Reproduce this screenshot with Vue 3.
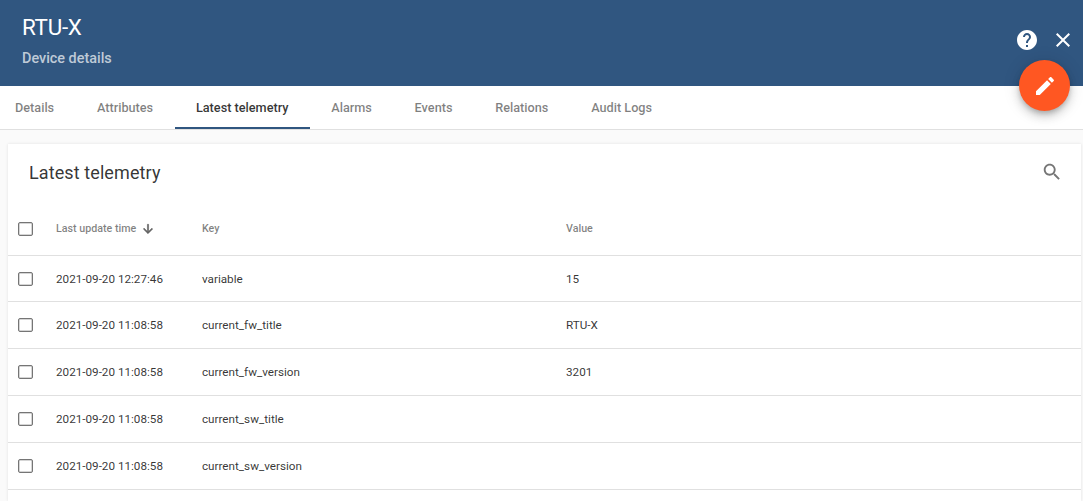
<template>
  <div class="page">
    <header class="head">
      <div class="titles">
        <h1>RTU-X</h1>
        <p>Device details</p>
      </div>
      <div class="actions">
        <svg class="ico" viewBox="0 0 24 24" width="24" height="24"><path fill="#fff" d="M12 2C6.48 2 2 6.48 2 12s4.48 10 10 10 10-4.48 10-10S17.52 2 12 2zm1 17h-2v-2h2v2zm2.07-7.75l-.9.92C13.45 12.9 13 13.5 13 15h-2v-.5c0-1.1.45-2.1 1.17-2.83l1.24-1.26c.37-.36.59-.86.59-1.41 0-1.1-.9-2-2-2s-2 .9-2 2H8c0-2.21 1.79-4 4-4s4 1.79 4 4c0 .88-.36 1.68-.93 2.25z"/></svg>
        <svg class="ico" viewBox="0 0 24 24" width="24" height="24"><path fill="#fff" d="M19 6.41L17.59 5 12 10.59 6.41 5 5 6.41 10.59 12 5 17.59 6.41 19 12 13.41 17.59 19 19 17.59 13.41 12z"/></svg>
      </div>
    </header>
    <button class="fab" aria-label="Edit">
      <svg viewBox="0 0 24 24" width="24" height="24"><path fill="#fff" d="M3 17.25V21h3.75L17.81 9.94l-3.75-3.75L3 17.25zM20.71 7.04c.39-.39.39-1.02 0-1.41l-2.34-2.34c-.39-.39-1.02-.39-1.41 0l-1.83 1.83 3.75 3.75 1.83-1.83z"/></svg>
    </button>
    <nav class="tabs">
      <span v-for="t in tabs" :key="t" class="tab" :class="{ active: t === 'Latest telemetry' }">{{ t }}</span>
    </nav>
    <main class="body">
      <section class="card">
        <div class="toolbar">
          <h2>Latest telemetry</h2>
          <svg viewBox="0 0 24 24" width="22" height="22"><path fill="#757575" d="M15.5 14h-.79l-.28-.27C15.41 12.59 16 11.11 16 9.5 16 5.91 13.09 3 9.5 3S3 5.91 3 9.5 5.91 16 9.5 16c1.61 0 3.09-.59 4.23-1.57l.27.28v.79l5 4.99L20.49 19l-4.99-5zm-6 0C7.01 14 5 11.99 5 9.5S7.01 5 9.5 5 14 7.01 14 9.5 11.99 14 9.5 14z"/></svg>
        </div>
        <div class="row headrow">
          <span class="check"></span>
          <span class="c-time">Last update time
            <svg viewBox="0 0 24 24" width="14" height="14"><path fill="#616161" stroke="#616161" stroke-width="1" d="M20 12l-1.41-1.41L13 16.17V4h-2v12.17l-5.58-5.59L4 12l8 8 8-8z"/></svg>
          </span>
          <span class="c-key">Key</span>
          <span class="c-val">Value</span>
        </div>
        <div v-for="r in rows" :key="r.key" class="row">
          <span class="check"></span>
          <span class="c-time">{{ r.time }}</span>
          <span class="c-key">{{ r.key }}</span>
          <span class="c-val">{{ r.value }}</span>
        </div>
      </section>
    </main>
  </div>
</template>

<script setup>
const tabs = ['Details', 'Attributes', 'Latest telemetry', 'Alarms', 'Events', 'Relations', 'Audit Logs']
const rows = [
  { time: '2021-09-20 12:27:46', key: 'variable', value: '15' },
  { time: '2021-09-20 11:08:58', key: 'current_fw_title', value: 'RTU-X' },
  { time: '2021-09-20 11:08:58', key: 'current_fw_version', value: '3201' },
  { time: '2021-09-20 11:08:58', key: 'current_sw_title', value: '' },
  { time: '2021-09-20 11:08:58', key: 'current_sw_version', value: '' },
]
</script>

<style>
html, body { margin: 0; overflow: hidden; }
</style>

<style scoped>
.page {
  position: relative;
  width: 1083px;
  height: 501px;
  overflow: hidden;
  background: #fff;
  font-family: Roboto, "Liberation Sans", sans-serif;
}
.head {
  height: 86px;
  background: #305680;
  display: flex;
  justify-content: space-between;
  box-sizing: border-box;
  padding: 11px 8px 0 22px;
  color: #fff;
}
h1 { margin: 0; font-size: 22.4px; font-weight: 400; line-height: 32px; letter-spacing: -0.3px; }
.titles p { margin: 6px 0 0; font-size: 14.4px; font-weight: 500; line-height: 20px; color: rgba(255,255,255,.7); }
.actions { display: flex; gap: 12px; padding-top: 17px; }
.fab {
  position: absolute;
  left: 1019px;
  top: 60px;
  width: 51px;
  height: 51px;
  border: 0;
  padding: 0;
  border-radius: 50%;
  background: #ff5722;
  display: flex;
  align-items: center;
  justify-content: center;
  box-shadow: 0 3px 5px -1px rgba(0,0,0,.2), 0 6px 10px 0 rgba(0,0,0,.14), 0 1px 18px 0 rgba(0,0,0,.12);
}
.tabs {
  height: 44px;
  box-sizing: border-box;
  display: flex;
  border-bottom: 1px solid #e0e0e0;
}
.tab {
  height: 43px;
  box-sizing: border-box;
  padding: 0 21.4px;
  display: flex;
  align-items: center;
  font-size: 12.7px;
  font-weight: 500;
  color: rgba(0,0,0,.5);
}
.tab:first-child { padding-left: 15px; }
.tab.active { color: rgba(0,0,0,.8); box-shadow: inset 0 -2px 0 #305680; }
.body {
  background: #fafafa;
  height: 371px;
  box-sizing: border-box;
  padding: 14px 2px 0 8px;
}
.card {
  background: #fff;
  height: 100%;
  box-shadow: 0 0 3px rgba(0,0,0,.1);
}
.toolbar {
  height: 56px;
  box-sizing: border-box;
  padding: 0 18px 0 21px;
  display: flex;
  align-items: center;
  justify-content: space-between;
}
h2 { margin: 0; font-size: 18px; font-weight: 400; color: rgba(0,0,0,.8); letter-spacing: .1px; }
.row {
  height: 47px;
  box-sizing: border-box;
  display: flex;
  align-items: center;
  border-bottom: 1px solid #e0e0e0;
  font-size: 11.7px;
  color: rgba(0,0,0,.8);
}
.row:nth-child(3) { height: 46px; }
.headrow { height: 56px; padding-top: 2px; font-size: 10.7px; font-weight: 500; color: rgba(0,0,0,.5); }
.check {
  width: 13px;
  height: 12px;
  border: 1px solid #757575;
  box-shadow: inset 0 0 0 .5px rgba(117,117,117,.6);
  border-radius: 2px;
  margin-left: 10px;
  flex: none;
}
.c-time { margin-left: 23px; width: 146px; flex: none; display: flex; align-items: center; gap: 5px; }
.c-key { width: 364px; flex: none; }
</style>
